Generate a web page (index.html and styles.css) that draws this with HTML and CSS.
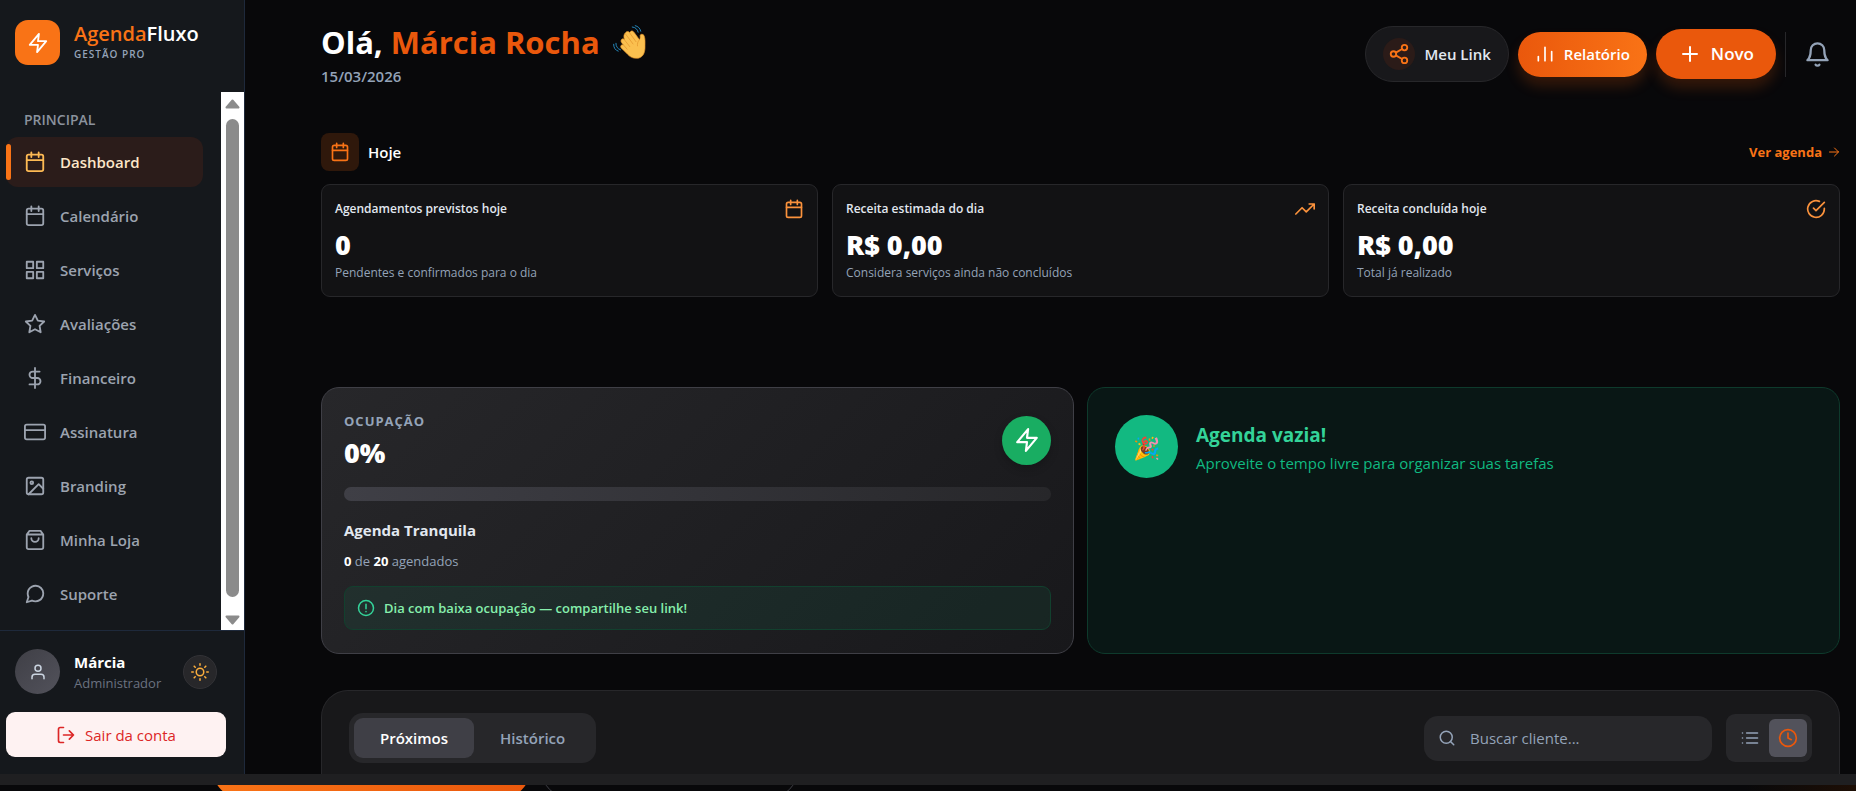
FILE: index.html
```html
<!doctype html>
<html lang="pt-BR">
<head>
    <meta charset="utf-8">
    <title>AgendaFluxo</title>
    <link rel="stylesheet" href="styles.css">
</head>

<body>

    <!-- icones -->
    <svg class="sprite" aria-hidden="true">
        <symbol id="zap" viewBox="0 0 24 24"><path d="M13 2 3 14h9l-1 8 10-12h-9l1-8z"/></symbol>
        <symbol id="calendar" viewBox="0 0 24 24"><rect x="3" y="4" width="18" height="18" rx="2"/><path d="M8 1.5v5M16 1.5v5M3 10h18"/></symbol>
        <symbol id="grid" viewBox="0 0 24 24"><path d="M3 3h7v7H3zM14 3h7v7h-7zM14 14h7v7h-7zM3 14h7v7H3z"/></symbol>
        <symbol id="star" viewBox="0 0 24 24"><path d="m12 2 3.09 6.26L22 9.27l-5 4.87 1.18 6.88L12 17.77l-6.18 3.25L7 14.14 2 9.27l6.91-1.01z"/></symbol>
        <symbol id="dollar" viewBox="0 0 24 24"><path d="M12 1v22M17 5H9.5a3.5 3.5 0 0 0 0 7h5a3.5 3.5 0 0 1 0 7H6"/></symbol>
        <symbol id="card" viewBox="0 0 24 24"><rect x="1" y="4" width="22" height="16" rx="2"/><path d="M1 10h22"/></symbol>
        <symbol id="image" viewBox="0 0 24 24"><rect x="3" y="3" width="18" height="18" rx="2"/><circle cx="8.5" cy="8.5" r="1.5"/><path d="m21 15-5-5L5 21"/></symbol>
        <symbol id="bag" viewBox="0 0 24 24"><path d="M6 2 3 6v14a2 2 0 0 0 2 2h14a2 2 0 0 0 2-2V6l-3-4zM3 6h18M16 10a4 4 0 0 1-8 0"/></symbol>
        <symbol id="chat" viewBox="0 0 24 24"><path d="M21 11.5a8.38 8.38 0 0 1-.9 3.8 8.5 8.5 0 0 1-7.6 4.7 8.38 8.38 0 0 1-3.8-.9L3 21l1.9-5.7a8.38 8.38 0 0 1-.9-3.8 8.5 8.5 0 0 1 4.7-7.6 8.38 8.38 0 0 1 3.8-.9h.5a8.48 8.48 0 0 1 8 8z"/></symbol>
        <symbol id="user" viewBox="0 0 24 24"><path d="M20 21v-2a4 4 0 0 0-4-4H8a4 4 0 0 0-4 4v2"/><circle cx="12" cy="7" r="4"/></symbol>
        <symbol id="sun" viewBox="0 0 24 24"><circle cx="12" cy="12" r="5"/><path d="M12 1v2M12 21v2M4.22 4.22l1.42 1.42M18.36 18.36l1.42 1.42M1 12h2M21 12h2M4.22 19.78l1.42-1.42M18.36 5.64l1.42-1.42"/></symbol>
        <symbol id="logout" viewBox="0 0 24 24"><path d="M9 21H5a2 2 0 0 1-2-2V5a2 2 0 0 1 2-2h4M16 17l5-5-5-5M21 12H9"/></symbol>
        <symbol id="share" viewBox="0 0 24 24"><circle cx="18" cy="5" r="3"/><circle cx="6" cy="12" r="3"/><circle cx="18" cy="19" r="3"/><path d="m8.59 13.51 6.83 3.98M15.41 6.51l-6.82 3.98"/></symbol>
        <symbol id="bars" viewBox="0 0 24 24"><path d="M20 20V9M12 20V4M4 20v-5"/></symbol>
        <symbol id="plus" viewBox="0 0 24 24"><path d="M12 5v14M5 12h14"/></symbol>
        <symbol id="bell" viewBox="0 0 24 24"><path d="M18 8A6 6 0 0 0 6 8c0 7-3 9-3 9h18s-3-2-3-9M13.73 21a2 2 0 0 1-3.46 0"/></symbol>
        <symbol id="arrow" viewBox="0 0 24 24"><path d="M3 12h18M13 4l8 8-8 8"/></symbol>
        <symbol id="trend" viewBox="0 0 24 24"><path d="m23 6-9.5 9.5-5-5L1 18M17 6h6v6"/></symbol>
        <symbol id="check" viewBox="0 0 24 24"><path d="M22 11.08V12a10 10 0 1 1-5.93-9.14M22 4 12 14.01l-3-3"/></symbol>
        <symbol id="alert" viewBox="0 0 24 24"><circle cx="12" cy="12" r="10"/><path d="M12 7v6M12 16.5v.5"/></symbol>
        <symbol id="search" viewBox="0 0 24 24"><circle cx="11" cy="11" r="8"/><path d="m21 21-4.35-4.35"/></symbol>
        <symbol id="list" viewBox="0 0 24 24"><path d="M8 6h13M8 12h13M8 18h13M3 6h.01M3 12h.01M3 18h.01"/></symbol>
        <symbol id="clock" viewBox="0 0 24 24"><circle cx="12" cy="12" r="10"/><path d="M12 6v6l4 2"/></symbol>
    </svg>

    <div class="app">
        <!-- menu lateral -->
        <aside class="sidebar">
            <div class="brand">
                <span class="brand-logo"><svg class="icon"><use href="#zap"/></svg></span>
                <div>
                    <div class="brand-name"><span>Agenda</span>Fluxo</div>
                    <div class="brand-sub">GESTÃO PRO</div>
                </div>
            </div>

            <div class="menu">
                <nav class="nav">
                    <h2 class="nav-title">PRINCIPAL</h2>
                    <a href="#" class="nav-item active"><svg class="icon"><use href="#calendar"/></svg>Dashboard</a>
                    <a href="#" class="nav-item"><svg class="icon"><use href="#calendar"/></svg>Calendário</a>
                    <a href="#" class="nav-item"><svg class="icon"><use href="#grid"/></svg>Serviços</a>
                    <a href="#" class="nav-item"><svg class="icon"><use href="#star"/></svg>Avaliações</a>
                    <a href="#" class="nav-item"><svg class="icon"><use href="#dollar"/></svg>Financeiro</a>
                    <a href="#" class="nav-item"><svg class="icon"><use href="#card"/></svg>Assinatura</a>
                    <a href="#" class="nav-item"><svg class="icon"><use href="#image"/></svg>Branding</a>
                    <a href="#" class="nav-item"><svg class="icon"><use href="#bag"/></svg>Minha Loja</a>
                    <a href="#" class="nav-item"><svg class="icon"><use href="#chat"/></svg>Suporte</a>
                </nav>
                <div class="scrollbar" aria-hidden="true">
                    <svg class="scroll-arrow" viewBox="0 0 15 10"><path d="M7.5 1.5 13.5 8.5h-12z"/></svg>
                    <div class="scroll-thumb"></div>
                    <svg class="scroll-arrow" viewBox="0 0 15 10"><path d="M7.5 8.5 1.5 1.5h12z"/></svg>
                </div>
            </div>

            <div class="account">
                <div class="user">
                    <span class="avatar"><svg class="icon"><use href="#user"/></svg></span>
                    <div class="user-text">
                        <div class="user-name">Márcia</div>
                        <div class="user-role">Administrador</div>
                    </div>
                    <button type="button" class="theme" aria-label="Tema"><svg class="icon"><use href="#sun"/></svg></button>
                </div>
                <button type="button" class="logout"><svg class="icon"><use href="#logout"/></svg>Sair da conta</button>
            </div>
        </aside>

        <!-- conteudo -->
        <main class="main">
            <header class="topbar">
                <div>
                    <h1 class="hello">Olá, <span>Márcia Rocha</span>
                        <svg class="wave" viewBox="20 25 102 104" role="img" aria-label="Aceno">
                            <g fill="none" stroke="#e08f2a" stroke-width="2">
                                <path fill="#fbc04f" d="M60 49c4-6 10-5 13-1 4-7 10-6 14 0l16 22c3-4 2-9 2-13 1-5 9-5 12 0 4 10 3 20 3 32 1 24-9 38-26 38-13 0-21-5-28-13L47 95c-4-5 0-11 7-9-6-7-9-10-7-15 2-4 6-5 10-2-3-8-2-16 3-20z"/>
                                <path d="m60 52 24 32M73 49l20 28M56 69l18 23M54 86l12 14M103 70c-5 6-7 12-6 20"/>
                            </g>
                            <path fill="none" stroke="#2488bd" stroke-width="3" stroke-linecap="round" d="M81 31c10 1 16 7 18 16M90 27c9 2 15 8 17 17M31 81c0 10 5 17 14 20M24 84c0 11 5 18 14 21"/>
                        </svg>
                    </h1>
                    <div class="date">15/03/2026</div>
                </div>
                <div class="actions">
                    <button type="button" class="btn btn-link"><span class="btn-dot"><svg class="icon"><use href="#share"/></svg></span>Meu Link</button>
                    <button type="button" class="btn btn-report"><svg class="icon"><use href="#bars"/></svg>Relatório</button>
                    <button type="button" class="btn btn-new"><svg class="icon"><use href="#plus"/></svg>Novo</button>
                    <span class="divider"></span>
                    <button type="button" class="bell" aria-label="Notificações"><svg class="icon"><use href="#bell"/></svg></button>
                </div>
            </header>

            <section class="today">
                <div class="today-head">
                    <span class="today-icon"><svg class="icon"><use href="#calendar"/></svg></span>
                    <h2>Hoje</h2>
                    <a href="#">Ver agenda <svg class="icon"><use href="#arrow"/></svg></a>
                </div>
                <div class="cards">
                    <div class="card">
                        <div class="card-head">Agendamentos previstos hoje <svg class="icon"><use href="#calendar"/></svg></div>
                        <div class="value">0</div>
                        <div class="card-note">Pendentes e confirmados para o dia</div>
                    </div>
                    <div class="card">
                        <div class="card-head">Receita estimada do dia <svg class="icon"><use href="#trend"/></svg></div>
                        <div class="value">R$ 0,00</div>
                        <div class="card-note">Considera serviços ainda não concluídos</div>
                    </div>
                    <div class="card">
                        <div class="card-head">Receita concluída hoje <svg class="icon"><use href="#check"/></svg></div>
                        <div class="value">R$ 0,00</div>
                        <div class="card-note">Total já realizado</div>
                    </div>
                </div>
            </section>

            <div class="panels">
                <section class="usage">
                    <div class="usage-head">
                        <div>
                            <h3>OCUPAÇÃO</h3>
                            <div class="value">0%</div>
                        </div>
                        <span class="usage-icon"><svg class="icon"><use href="#zap"/></svg></span>
                    </div>
                    <div class="bar"></div>
                    <div class="usage-status">Agenda Tranquila</div>
                    <div class="usage-count"><b>0</b> de <b>20</b> agendados</div>
                    <div class="tip"><svg class="icon"><use href="#alert"/></svg>Dia com baixa ocupação — compartilhe seu link!</div>
                </section>
                <section class="empty">
                    <span class="empty-icon">🎉</span>
                    <div>
                        <h3>Agenda vazia!</h3>
                        <p>Aproveite o tempo livre para organizar suas tarefas</p>
                    </div>
                </section>
            </div>

            <section class="list">
                <div class="tabs">
                    <button type="button" class="current">Próximos</button>
                    <button type="button">Histórico</button>
                </div>
                <label class="search">
                    <svg class="icon"><use href="#search"/></svg>
                    <input type="text" placeholder="Buscar cliente..." aria-label="Buscar cliente">
                </label>
                <div class="view">
                    <button type="button" aria-label="Lista"><svg class="icon"><use href="#list"/></svg></button>
                    <button type="button" class="current" aria-label="Horários"><svg class="icon"><use href="#clock"/></svg></button>
                </div>
            </section>
        </main>
    </div>

    <!-- rodape cortado pela janela -->
    <div class="strip"></div>
    <div class="under">
        <div class="pill pill-full"></div>
        <div class="pill"></div>
    </div>

</body>
</html>
```
FILE: styles.css
```css
* {
    box-sizing: border-box;
    margin: 0;
    padding: 0;
}

body {
    height: 100vh;
    display: flex;
    flex-direction: column;
    overflow: hidden;
    background: #08080a;
    color: #fff;
    font-family: "Open Sans", "Noto Sans", sans-serif;
    font-size: 15px;
    line-height: 24px;
}

button, input {
    font: inherit;
    color: inherit;
    border: 0;
    background: none;
}

button {
    cursor: pointer;
}

a {
    text-decoration: none;
}

.sprite {
    display: none;
}

.icon {
    width: 20px;
    height: 20px;
    flex: none;
    fill: none;
    stroke: currentColor;
    stroke-width: 2;
    stroke-linecap: round;
    stroke-linejoin: round;
}

.app {
    flex: 1;
    min-height: 0;
    display: flex;
}

/* menu lateral */
.sidebar {
    width: 245px;
    flex: none;
    display: flex;
    flex-direction: column;
    background: #15181c;
    border-right: 1px solid #1e293b;
}

.brand {
    height: 92px;
    flex: none;
    display: flex;
    align-items: flex-start;
    gap: 14px;
    padding: 20px 15px;
}

.brand-logo {
    width: 45px;
    height: 45px;
    display: flex;
    align-items: center;
    justify-content: center;
    border-radius: 13px;
    background: #f97316;
}

.brand-logo .icon {
    width: 22px;
    height: 22px;
}

.brand-name {
    padding-top: 2px;
    font-size: 20px;
    font-weight: 600;
}

.brand-name span {
    color: #f97316;
}

.brand-sub {
    font-size: 10px;
    font-weight: 600;
    line-height: 16px;
    letter-spacing: 1px;
    color: #94a3b8;
}

.menu {
    flex: 1;
    min-height: 0;
    display: flex;
}

.nav {
    flex: 1;
    display: flex;
    flex-direction: column;
    gap: 4px;
    padding: 18px 18px 0 6px;
    overflow: hidden;
}

.nav-title {
    padding: 0 18px 3px;
    font-size: 14px;
    font-weight: 600;
    line-height: 20px;
    color: #8b929d;
}

.nav-item {
    height: 50px;
    flex: none;
    display: flex;
    align-items: center;
    gap: 14px;
    padding: 0 18px;
    border-radius: 12px;
    font-weight: 600;
    color: #9ca3af;
}

.nav-item .icon {
    width: 22px;
    height: 22px;
}

.nav-item.active {
    position: relative;
    background: #2b1c1a;
    color: #fde6c8;
}

.nav-item.active .icon {
    color: #fdba54;
}

.nav-item.active::before {
    content: "";
    position: absolute;
    left: 0;
    top: 7px;
    bottom: 7px;
    width: 5px;
    border-radius: 3px;
    background: #f97316;
}

.scrollbar {
    width: 23px;
    display: flex;
    flex-direction: column;
    align-items: center;
    gap: 10px;
    padding: 7px 0 5px;
    background: #fff;
}

.scroll-arrow {
    width: 15px;
    height: 10px;
    flex: none;
    fill: #8b8b8b;
    stroke: #8b8b8b;
    stroke-width: 2;
    stroke-linejoin: round;
}

.scroll-thumb {
    width: 13px;
    height: 478px;
    margin-bottom: auto;
    border-radius: 7px;
    background: #8b8b8b;
}

.account {
    padding: 18px 18px 17px 6px;
    border-top: 1px solid #1e293b;
}

.user {
    display: flex;
    align-items: center;
    gap: 14px;
    margin-bottom: 18px;
    padding: 0 9px;
}

.avatar {
    width: 45px;
    height: 45px;
    display: flex;
    align-items: center;
    justify-content: center;
    border-radius: 50%;
    background: linear-gradient(135deg, #3f3f46, #52525b);
    color: #cbd5e1;
}

.avatar .icon {
    width: 18px;
    height: 18px;
}

.user-text {
    flex: 1;
}

.user-name {
    font-weight: 700;
    line-height: 22px;
}

.user-role {
    font-size: 13px;
    line-height: 20px;
    color: #6b7280;
}

.theme {
    width: 34px;
    height: 34px;
    display: flex;
    align-items: center;
    justify-content: center;
    border: 1px solid #323236;
    border-radius: 50%;
    background: #27272a;
    color: #fbae3c;
}

.theme .icon {
    width: 18px;
    height: 18px;
}

.logout {
    width: 100%;
    height: 45px;
    display: flex;
    align-items: center;
    justify-content: center;
    gap: 9px;
    border-radius: 9px;
    background: #fef2f2;
    color: #dc2626;
}

/* topo */
.main {
    flex: 1;
    min-width: 0;
    overflow: hidden;
    display: flex;
    flex-direction: column;
    padding: 20px 16px 0 76px;
}

.topbar {
    display: flex;
    align-items: center;
    justify-content: space-between;
    margin-bottom: 45px;
}

.hello {
    display: flex;
    align-items: center;
    gap: 8px;
    font-size: 31px;
    font-weight: 700;
    line-height: 44px;
    white-space: nowrap;
}

.hello span {
    color: #ea580c;
}

.wave {
    width: 34px;
    height: 34px;
    margin-left: 4px;
}

.date {
    font-weight: 600;
    color: #94a3b8;
}

.actions {
    display: flex;
    align-items: center;
    gap: 9px;
}

.btn {
    display: flex;
    align-items: center;
    gap: 9px;
    border-radius: 28px;
    font-weight: 600;
}

.btn-link {
    height: 56px;
    padding: 0 17px;
    border: 1px solid #27272a;
    background: #18181b;
    color: #e2e8f0;
}

.btn-dot {
    width: 32px;
    height: 32px;
    display: flex;
    align-items: center;
    justify-content: center;
    border-radius: 50%;
    background: #2b1b18;
    color: #f97316;
}

.btn-dot .icon {
    width: 22px;
    height: 22px;
}

.btn-report {
    height: 45px;
    padding: 0 17px;
    background: linear-gradient(90deg, #ea580c, #f97316);
    box-shadow: 0 9px 14px rgba(234, 88, 12, 0.2);
}

.btn-new {
    height: 50px;
    padding: 0 22px;
    background: #ea580c;
    box-shadow: 0 9px 14px rgba(234, 88, 12, 0.2);
    font-size: 17px;
}

.btn-new .icon {
    width: 24px;
    height: 24px;
}

.divider {
    width: 1px;
    height: 45px;
    background: #27272a;
}

.bell {
    width: 45px;
    height: 45px;
    display: flex;
    align-items: center;
    justify-content: center;
    color: #94a3b8;
}

.bell .icon {
    width: 27px;
    height: 27px;
}

/* hoje */
.today {
    margin-bottom: 90px;
}

.today-head {
    display: flex;
    align-items: center;
    gap: 9px;
    margin-bottom: 13px;
}

.today-icon {
    width: 38px;
    height: 38px;
    display: flex;
    align-items: center;
    justify-content: center;
    border-radius: 8px;
    background: #2f180b;
    color: #f97316;
}

.today-head h2 {
    font-size: 15px;
    font-weight: 600;
}

.today-head a {
    display: flex;
    align-items: center;
    gap: 6px;
    margin-left: auto;
    font-size: 13px;
    font-weight: 700;
    color: #f97316;
}

.today-head a .icon {
    width: 12px;
    height: 12px;
}

.cards {
    display: grid;
    grid-template-columns: repeat(3, 1fr);
    gap: 14px;
}

.card {
    padding: 14px 13px;
    border: 1px solid #27272a;
    border-radius: 9px;
    background: #121214;
}

.card-head {
    display: flex;
    align-items: center;
    justify-content: space-between;
    margin-bottom: 10px;
    font-size: 12px;
    font-weight: 600;
    line-height: 20px;
    color: #e2e8f0;
}

.card-head .icon {
    color: #fb923c;
}

.value {
    font-size: 27px;
    font-weight: 800;
    line-height: 32px;
}

.card-note {
    margin-top: 3px;
    font-size: 12px;
    line-height: 18px;
    color: #94a3b8;
}

/* ocupacao */
.panels {
    display: grid;
    grid-template-columns: 1fr 1fr;
    gap: 13px;
    margin-bottom: 36px;
}

.usage {
    padding: 23px 22px;
    border: 1px solid #3f3f46;
    border-radius: 18px;
    background: linear-gradient(135deg, #27272a, #18181b);
}

.usage-head {
    display: flex;
    align-items: center;
    justify-content: space-between;
    margin-bottom: 18px;
}

.usage h3 {
    margin-bottom: 6px;
    font-size: 13px;
    font-weight: 700;
    line-height: 20px;
    letter-spacing: 1px;
    color: #94a3b8;
}

.usage-icon {
    width: 49px;
    height: 49px;
    display: flex;
    align-items: center;
    justify-content: center;
    border-radius: 50%;
    background: #19ad62;
    box-shadow: 0 4px 9px rgba(0, 0, 0, 0.2);
}

.usage-icon .icon {
    width: 26px;
    height: 26px;
}

.bar {
    height: 14px;
    margin-bottom: 17px;
    border-radius: 7px;
    background: linear-gradient(90deg, #3f3f46, #27272a);
}

.usage-status {
    margin-bottom: 9px;
    font-weight: 700;
    color: #e2e8f0;
}

.usage-count {
    margin-bottom: 15px;
    font-size: 13px;
    line-height: 20px;
    color: #94a3b8;
}

.usage-count b {
    color: #fff;
}

.tip {
    height: 44px;
    display: flex;
    align-items: center;
    gap: 9px;
    padding: 0 12px;
    border: 1px solid #12402e;
    border-radius: 9px;
    background: rgba(16, 185, 129, 0.08);
    font-size: 13px;
    font-weight: 600;
    color: #86efac;
}

.tip .icon {
    width: 18px;
    height: 18px;
    color: #34d399;
}

.empty {
    display: flex;
    align-items: flex-start;
    gap: 18px;
    padding: 27px;
    border: 1px solid #0e3a2c;
    border-radius: 18px;
    background: #091715;
}

.empty-icon {
    width: 63px;
    height: 63px;
    flex: none;
    display: flex;
    align-items: center;
    justify-content: center;
    border-radius: 50%;
    background: #12b981;
    font-size: 22px;
}

.empty h3 {
    padding-top: 6px;
    font-size: 19px;
    font-weight: 700;
    line-height: 28px;
    color: #34d399;
}

.empty p {
    padding-top: 2px;
    color: #10b981;
}

/* lista */
.list {
    flex: 1;
    display: flex;
    align-items: center;
    align-content: flex-start;
    flex-wrap: wrap;
    gap: 14px;
    padding: 22px 27px 0;
    border: 1px solid #27272a;
    border-bottom: 0;
    border-radius: 27px 27px 0 0;
    background: #18181a;
}

.tabs {
    display: flex;
    margin-right: auto;
    padding: 5px;
    border-radius: 14px;
    background: #27272a;
}

.tabs button {
    height: 40px;
    padding: 0 26px;
    border-radius: 9px;
    font-weight: 600;
    color: #94a3b8;
}

.tabs .current {
    background: #3f3f46;
    color: #fff;
}

.search {
    width: 288px;
    height: 45px;
    display: flex;
    align-items: center;
    gap: 14px;
    padding: 0 14px;
    border-radius: 14px;
    background: #27272a;
    color: #94a3b8;
}

.search .icon {
    width: 18px;
    height: 18px;
}

.search input {
    flex: 1;
    min-width: 0;
    outline: 0;
}

.search input::placeholder {
    color: #94a3b8;
}

.view {
    display: flex;
    padding: 5px;
    border-radius: 9px;
    background: #27272a;
    color: #94a3b8;
}

.view button {
    width: 38px;
    height: 38px;
    display: flex;
    align-items: center;
    justify-content: center;
    border-radius: 6px;
}

.view .current {
    background: #52525b;
    color: #ea580c;
}

/* faixa de baixo */
.strip {
    height: 11px;
    flex: none;
    background: #1f1f21;
}

.under {
    height: 6px;
    flex: none;
    display: flex;
    align-items: flex-end;
    gap: 11px;
    padding-left: 213px;
    overflow: hidden;
    background: linear-gradient(90deg, #08080a 94%, #1d0e05);
}

.pill {
    width: 257px;
    height: 56px;
    flex: none;
    margin-bottom: -7px;
    border: 1px solid #3f3f46;
    border-radius: 28px;
}

.pill-full {
    width: 317px;
    border: 0;
    background: linear-gradient(90deg, #f97316, #ea580c);
}
```
